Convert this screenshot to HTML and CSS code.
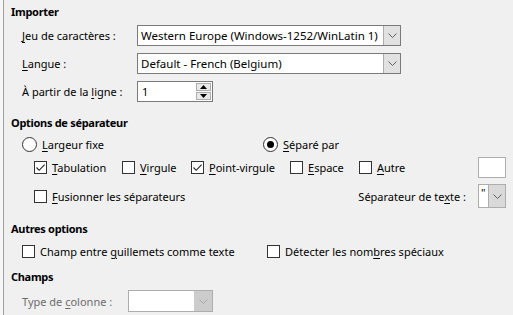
FILE: index.html
```html
<!DOCTYPE html>
<html lang="fr">
  <head>
    <meta charset="UTF-8" />
    <title>Importer</title>
    <link rel="stylesheet" href="styles.css">
  </head>
  <body>
    <div class="edge"></div>
    <div class="dlg">
      <h4 class="head first">Importer</h4>
      <div class="grid">
        <span class="lbl"><u>J</u>eu de caractères :</span>
        <div class="combo wide">
          <span class="val">Western Europe (Windows-1252/WinLatin 1)</span>
          <span class="btn"><svg width="9" height="5" viewBox="0 0 9 5"><path d="M0.5 0.5 L4.5 4.5 L8.5 0.5" fill="none" stroke="#606060"/></svg></span>
        </div>
        <span class="lbl"><u>L</u>angue :</span>
        <div class="combo wide">
          <span class="val">Default - French (Belgium)</span>
          <span class="btn"><svg width="9" height="5" viewBox="0 0 9 5"><path d="M0.5 0.5 L4.5 4.5 L8.5 0.5" fill="none" stroke="#606060"/></svg></span>
        </div>
        <span class="lbl">À partir de la <u>l</u>igne :</span>
        <div class="spin">
          <span class="val">1</span>
          <span class="arrows">
            <span class="arr"><svg width="7" height="4" viewBox="0 0 7 4"><path d="M0 4 L3.5 0 L7 4 Z" fill="#000"/></svg></span>
            <span class="arr"><svg width="7" height="4" viewBox="0 0 7 4"><path d="M0 0 L3.5 4 L7 0 Z" fill="#000"/></svg></span>
          </span>
        </div>
      </div>

      <h4 class="head sec2">Options de séparateur</h4>
      <div class="row radios">
        <label class="opt c-fixe"><span class="radio"></span><span><u>L</u>argeur fixe</span></label>
        <label class="opt"><span class="radio on"></span><span><u>S</u>éparé par</span></label>
      </div>
      <div class="row checks">
        <label class="opt c-tab"><span class="box"><svg width="11" height="11" viewBox="0 0 11 11"><path d="M1.5 5.5 L4.2 8.3 L9.6 2.6" fill="none" stroke="#222" stroke-width="1.1"/></svg></span><span><u>T</u>abulation</span></label>
        <label class="opt c-vir"><span class="box"></span><span><u>V</u>irgule</span></label>
        <label class="opt c-pv"><span class="box"><svg width="11" height="11" viewBox="0 0 11 11"><path d="M1.5 5.5 L4.2 8.3 L9.6 2.6" fill="none" stroke="#222" stroke-width="1.1"/></svg></span><span><u>P</u>oint-virgule</span></label>
        <label class="opt c-esp"><span class="box"></span><span><u>E</u>space</span></label>
        <label class="opt c-aut"><span class="box"></span><span><u>A</u>utre</span></label>
        <span class="field"></span>
      </div>
      <div class="row fusion">
        <label class="opt"><span class="box"></span><span><u>F</u>usionner les séparateurs</span></label>
        <span class="grow"></span>
        <span class="lbl">Séparateur de te<u>x</u>te :</span>
        <div class="combo tiny">
          <span class="val">"</span>
          <span class="btn dark"><svg width="9" height="5" viewBox="0 0 9 5"><path d="M0.5 0.5 L4.5 4.5 L8.5 0.5" fill="none" stroke="#606060"/></svg></span>
        </div>
      </div>

      <h4 class="head sec3">Autres options</h4>
      <div class="row other">
        <label class="opt c-champ"><span class="box"></span><span>Champ entre <u>g</u>uillemets comme texte</span></label>
        <label class="opt"><span class="box"></span><span>Détecter les nom<u>b</u>res spéciaux</span></label>
      </div>

      <h4 class="head sec4">Champs</h4>
      <div class="row cols">
        <span class="lbl off">Type de <u>c</u>olonne :</span>
        <div class="combo off small">
          <span class="val"></span>
          <span class="btn"><svg width="9" height="5" viewBox="0 0 9 5"><path d="M0.5 0.5 L4.5 4.5 L8.5 0.5" fill="none" stroke="#a8a8a8"/></svg></span>
        </div>
      </div>
    </div>
  </body>
</html>
```

FILE: styles.css
```css
body {
  margin: 0;
  background: #f0f0f0;
  font-family: "Noto Sans", sans-serif;
  font-size: 11px;
  color: #000;
  display: flex;
  height: 315px;
  overflow: hidden;
}
.edge {
  width: 3px;
  background: #f7f7f7;
  border-right: 1px solid #a0a0a0;
}
.dlg {
  flex: 1;
  padding: 0 7px 0 7px;
}
u {
  text-decoration-thickness: 1px;
  text-underline-offset: 2px;
}
.head {
  margin: 0;
  font-size: 11px;
  font-weight: bold;
  letter-spacing: -0.3px;
  line-height: 16px;
  height: 16px;
}
.first { margin-top: 4px; }
.sec2 { margin-top: 13px; }
.sec3 { margin-top: 13px; }
.sec4 { margin-top: 8px; }

.grid {
  margin-top: 5px;
  padding-left: 11px;
  display: grid;
  grid-template-columns: 115px auto;
  grid-auto-rows: 21px;
  row-gap: 7px;
  align-items: center;
}
.combo {
  display: flex;
  height: 21px;
  box-sizing: border-box;
  border: 1px solid #7a7a7a;
  background: #fff;
}
.combo .val {
  flex: 1;
  padding-left: 3px;
  line-height: 19px;
  white-space: nowrap;
  overflow: hidden;
}
.combo .btn {
  width: 16px;
  background: #e1e1e1;
  border-left: 1px solid #adadad;
  display: flex;
  align-items: center;
  justify-content: center;
}
.wide { width: 264px; }
.wide .val { font-size: 11.5px; }
.spin {
  width: 76px;
  height: 21px;
  box-sizing: border-box;
  border: 1px solid #7a7a7a;
  background: #fff;
  display: flex;
}
.spin .val {
  flex: 1;
  padding-left: 4px;
  line-height: 19px;
}
.arrows {
  display: flex;
  flex-direction: column;
  padding: 1px 1px 1px 0;
  gap: 1px;
}
.arr {
  width: 13px;
  height: 7px;
  border: 1px solid #adadad;
  background: #e9e9e9;
  display: flex;
  align-items: center;
  justify-content: center;
}

.row {
  display: flex;
  align-items: center;
}
.opt {
  display: flex;
  align-items: center;
  gap: 5px;
  white-space: nowrap;
}
.radio {
  width: 13px;
  height: 13px;
  border: 1px solid #333;
  border-radius: 50%;
  background: #fff;
  display: flex;
  align-items: center;
  justify-content: center;
}
.radio.on::after {
  content: "";
  width: 7px;
  height: 7px;
  border-radius: 50%;
  background: #000;
}
.box {
  width: 11px;
  height: 11px;
  border: 1px solid #333;
  background: #fff;
  display: flex;
}

.radios {
  margin-top: 3px;
  height: 20px;
  padding-left: 11px;
}
.c-fixe { width: 241px; }

.checks {
  margin-top: 3px;
  height: 21px;
  padding-left: 23px;
}
.c-tab { width: 88px; }
.c-vir { width: 69px; }
.c-pv { width: 99px; }
.c-esp { width: 69px; }
.c-aut { width: 119px; }
.field {
  width: 28px;
  height: 21px;
  box-sizing: border-box;
  border: 1px solid #adadad;
  background: #fff;
}

.fusion {
  margin-top: 6px;
  height: 24px;
  padding-left: 23px;
}
.grow { flex: 1; }
.fusion .lbl { margin-right: 12px; }
.tiny {
  width: 28px;
  height: 24px;
  border-color: #adadad;
}
.tiny .val { padding-left: 2px; line-height: 16px; }
.tiny .btn.dark {
  background: #d9d9d9;
  border-left: 1px solid #adadad;
}

.other {
  margin-top: 4px;
  height: 20px;
  padding-left: 11px;
}
.c-champ { width: 245px; }

.cols {
  margin-top: 5px;
  height: 22px;
  padding-left: 11px;
}
.cols .lbl { width: 106px; }
.off { color: #6d6d6d; }
.combo.off {
  border-color: #adadad;
  height: 22px;
}
.small { width: 85px; }
.combo.off .btn {
  background: #cccccc;
  border-left: none;
  width: 18px;
}
```
